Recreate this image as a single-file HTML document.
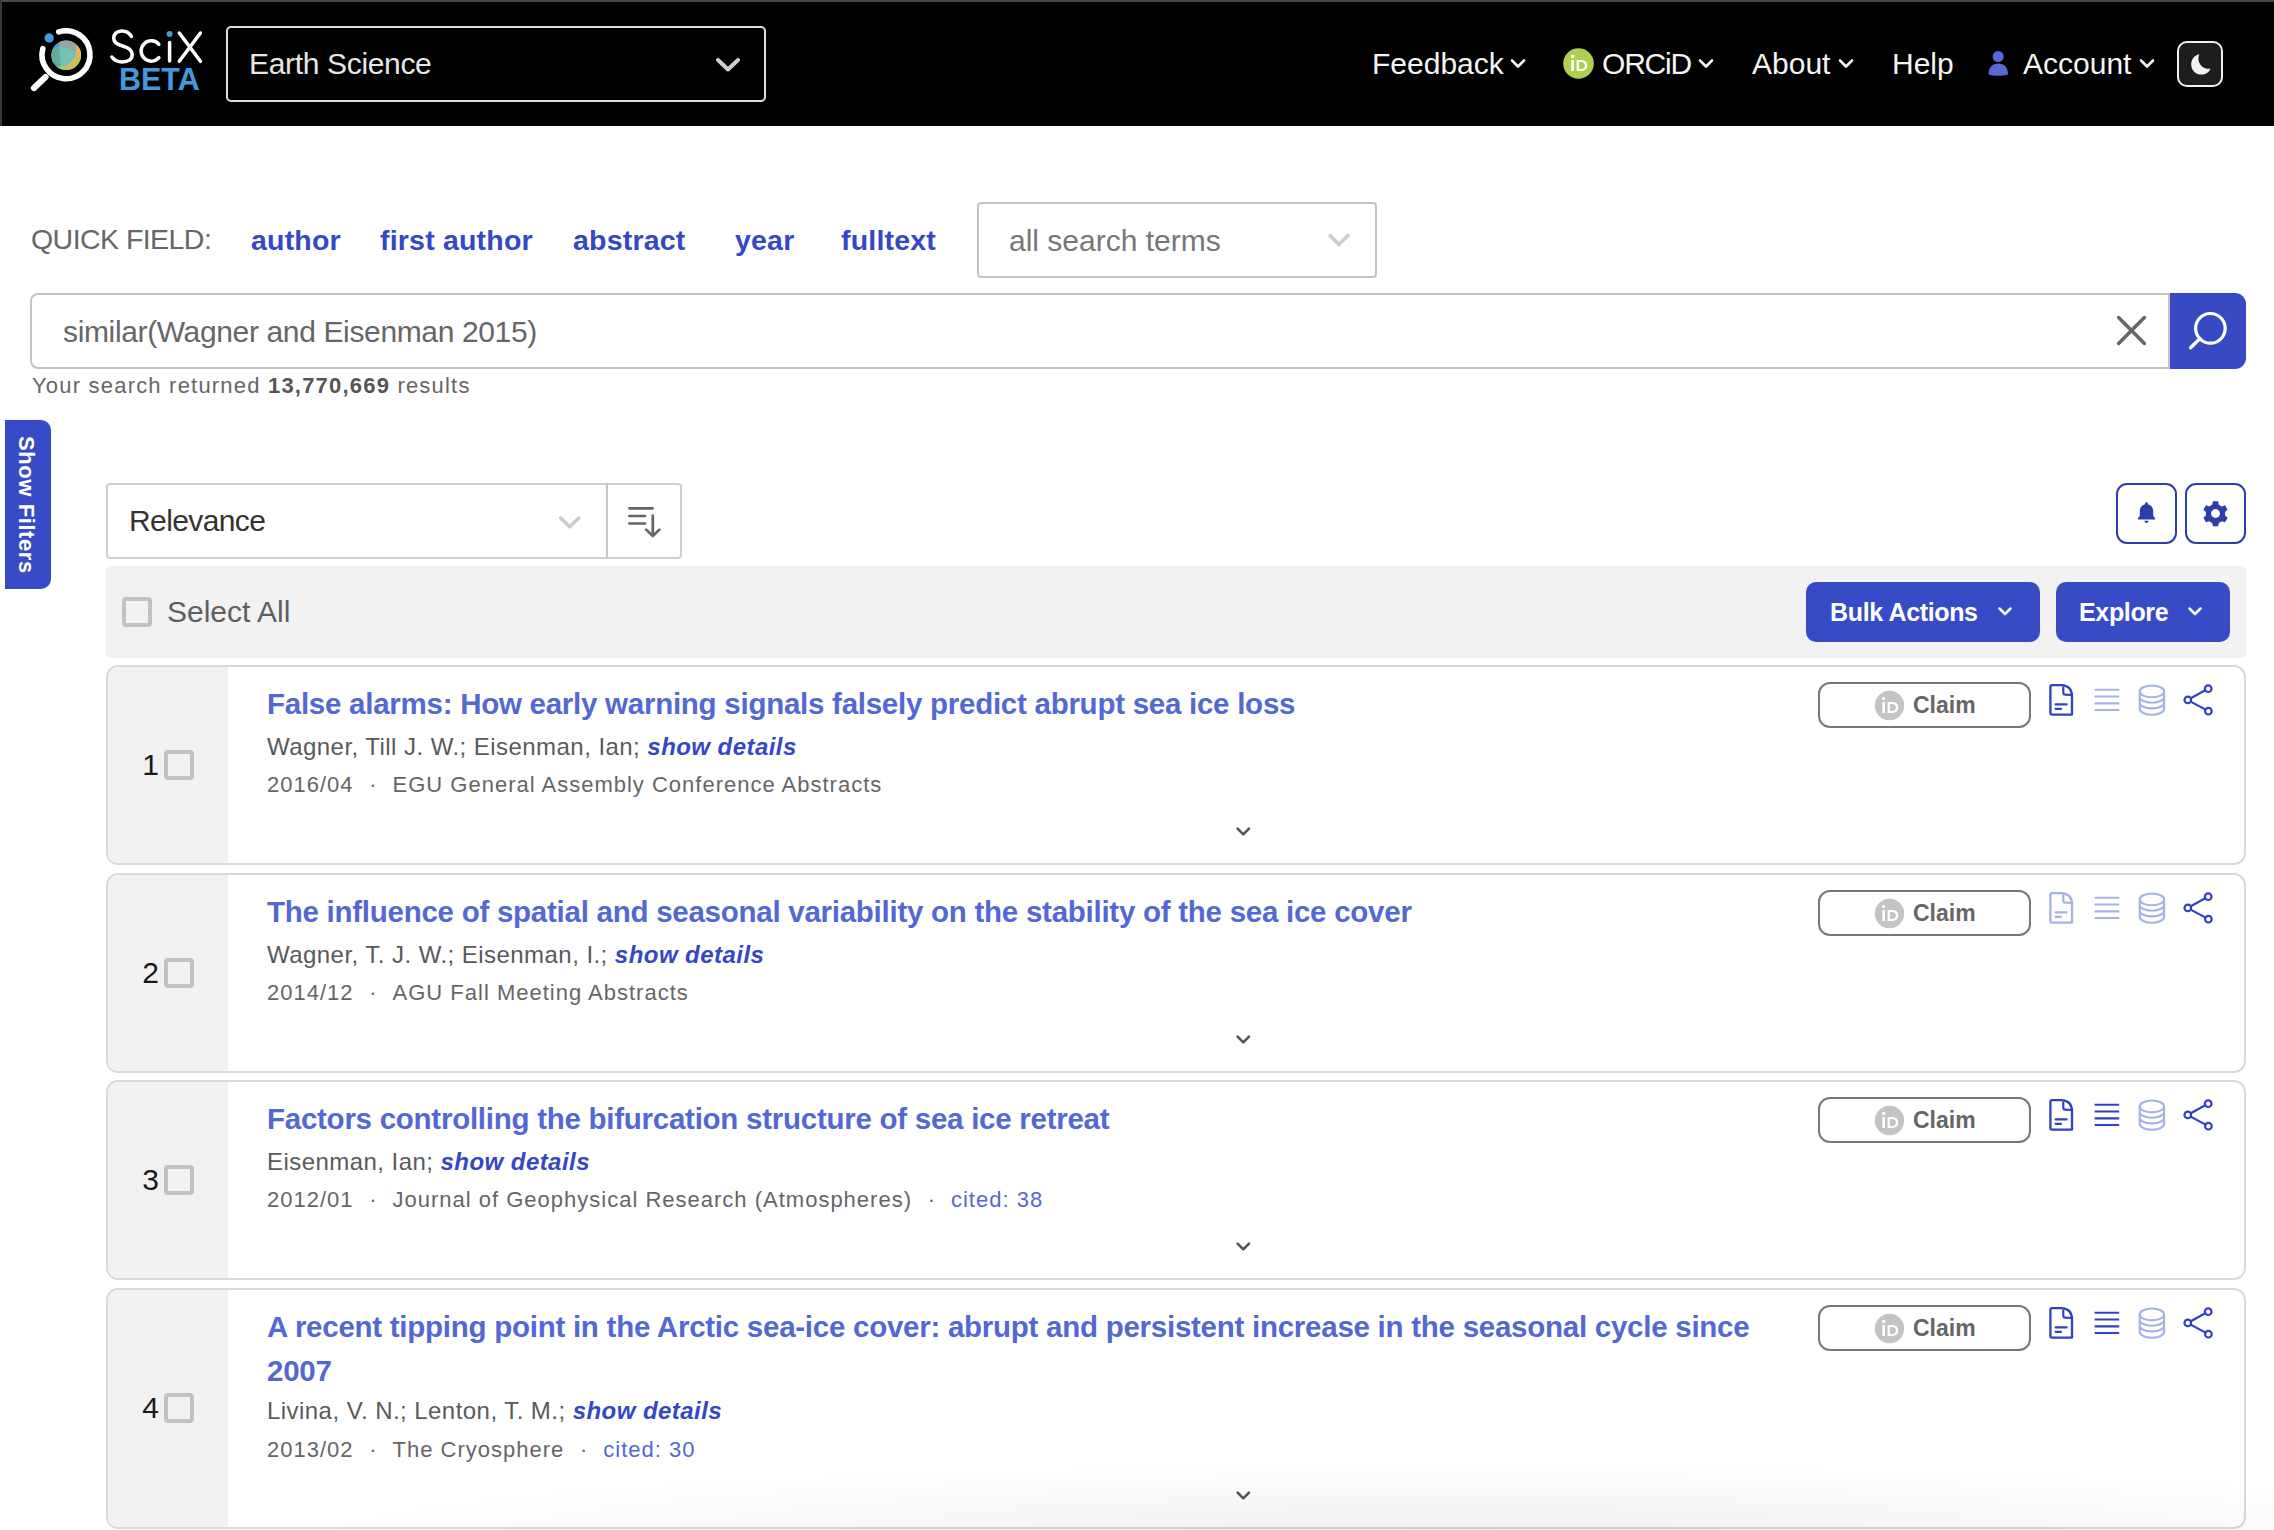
<!DOCTYPE html>
<html><head><meta charset="utf-8">
<style>
*{box-sizing:border-box;margin:0;padding:0}
html,body{width:2274px;height:1530px;overflow:hidden;background:#fff}
body{position:relative;font-family:"Liberation Sans",sans-serif;color:#333}
.a{position:absolute;white-space:nowrap;line-height:1}
#hdr{position:absolute;left:0;top:0;width:2274px;height:126px;background:#000}
#hdr .topline{position:absolute;left:0;top:0;width:2274px;height:2px;background:#484848}
#hdr .leftline{position:absolute;left:0;top:0;width:2px;height:126px;background:#383838}
.nav{color:#f4f4f4;font-size:30px}
.chev{position:absolute}

.ql{top:226px;font-size:28.5px;font-weight:700;color:#3547c4;letter-spacing:0.2px}
.cb{width:30px;height:30px;border:4px solid #c2c2c2;border-radius:4px;background:transparent}
.btn{background:#384bc6;border-radius:10px}
.btnt{top:600px;font-size:25px;font-weight:700;color:#fff;letter-spacing:-0.35px}

.card{position:absolute;left:106px;width:2140px;border:2px solid #d9d9d9;border-radius:12px;overflow:hidden;background:#fff}
.lcol{position:absolute;left:0;top:0;width:120px;height:100%;background:#f2f2f2}
.num{left:0;width:120px;text-align:center;font-size:30px;color:#1a1a1a;padding-left:0px}
.cb2{display:inline-block;width:30px;height:30px;border:4px solid #c2c2c2;border-radius:4px;vertical-align:-5px;margin-left:5px}
.ttl{left:159px;font-size:29.5px;font-weight:700;color:#5468d4;letter-spacing:-0.26px}
.auth{left:159px;font-size:24px;color:#5a5a5a;letter-spacing:0.45px}
.auth b{color:#3547c4}
.meta{left:159px;font-size:22px;color:#666;letter-spacing:1.0px}
.dot{display:inline-block;width:39px;text-align:center;letter-spacing:0}
.claim{left:1710px;top:15px;width:213px;height:46px;border:2px solid #777;border-radius:12px}
.claimt{left:1805px;top:27px;font-size:23px;font-weight:700;color:#666}
</style></head><body>

<div id="hdr">
  <div class="topline"></div><div class="leftline"></div>
  <!-- logo -->
  <svg class="a" style="left:0;top:0" width="220" height="126" viewBox="0 0 220 126">
    <defs><clipPath id="globe"><circle cx="66.2" cy="55.2" r="14.8"/></clipPath></defs>
    <g clip-path="url(#globe)">
      <rect x="50" y="40" width="32" height="32" fill="#74c2b4"/>
      <path d="M50,40 L62,40 L59,47 L50,49 Z" fill="#4499d9"/>
      <path d="M60,40 L82,40 L82,58 L76,52 Q68,47 59,47 Z" fill="#93a6a0"/>
      <path d="M76,46 L82,46 L82,62 L76,53 Z" fill="#f0b060"/>
      <path d="M76,53 L82,60 L82,72 L64,72 L63,67 Q72,64 76,53 Z" fill="#cdbf5e"/>
      <path d="M50,67 L64,66 L68,72 L50,72 Z" fill="#9fcf5c"/>
      <path d="M50,49 L59,47 L61,66 L50,67 Z" fill="#62ab9c"/>
    </g>
    <path d="M58.8,31.9 A24,24 0 1 1 42.8,48.6" fill="none" stroke="#fff" stroke-width="5.6" stroke-linecap="round"/>
    <path d="M34,88 L45.5,77" fill="none" stroke="#fff" stroke-width="6.2" stroke-linecap="round"/>
    <circle cx="49.2" cy="38" r="4.7" fill="#4499d9"/>
    <!-- SciX -->
    <g fill="none" stroke="#fff" stroke-width="3.5" stroke-linecap="round">
      <path d="M131.5,36.5 C129.3,32.6 125.8,30.9 121.8,30.9 C116.6,30.9 113.6,34.3 113.7,38.4 C113.8,43.2 118,44.8 122.6,46 C128.3,47.5 132.2,49.6 132.2,54.6 C132.2,59.6 128,62 122.4,62 C117.6,62 114.2,60.2 111.9,57"/>
      <path d="M158.9,44.3 A10.15,10.15 0 1 0 158.9,57.7"/>
      <path d="M169.6,42.4 L169.6,61"/>
      <path d="M179.3,33 L200.4,61.3 M200.4,33 L179.3,61.3"/>
    </g>
    <circle cx="169.6" cy="34" r="3" fill="#4499d9"/>
  </svg>
  <div class="a" style="left:119px;top:64px;font-size:30.5px;font-weight:700;color:#4499dd;letter-spacing:0px" id="beta">BETA</div>

  <!-- Earth science select -->
  <div class="a" style="left:226px;top:26px;width:540px;height:76px;border:2px solid #dedede;border-radius:5px"></div>
  <div class="a nav" id="earth" style="left:249px;top:49px;color:#e6e6e6;letter-spacing:-0.33px">Earth Science</div>
  <svg class="a" style="left:714px;top:56px" width="28" height="18" viewBox="0 0 28 18"><path d="M4,4 L14,13.5 L24,4" fill="none" stroke="#cfcfcf" stroke-width="4" stroke-linecap="round" stroke-linejoin="round"/></svg>

  <!-- right nav -->
  <div class="a nav" id="fb" style="left:1372px;top:49px">Feedback</div>
  <svg class="a" style="left:1509px;top:57px" width="18" height="13" viewBox="0 0 18 13"><path d="M3,3.5 L9,9.5 L15,3.5" fill="none" stroke="#f4f4f4" stroke-width="2.6" stroke-linecap="round" stroke-linejoin="round"/></svg>
  <svg class="a" style="left:1563px;top:48px" width="31" height="31" viewBox="0 0 31 31"><circle cx="15.5" cy="15.5" r="15.3" fill="#aecf4f"/><rect x="8.3" y="12" width="2.6" height="11" fill="#fff"/><circle cx="9.6" cy="8.4" r="1.7" fill="#fff"/><path d="M13.6,12 h4.6 c3.8,0 6,2.3 6,5.5 c0,3.2 -2.2,5.5 -6,5.5 h-4.6 z M15.9,14 v7 h2.3 c2.4,0 3.7,-1.4 3.7,-3.5 c0,-2.1 -1.3,-3.5 -3.7,-3.5 z" fill="#fff"/></svg>
  <div class="a nav" id="orcid" style="left:1602px;top:49px;letter-spacing:-1.2px">ORCiD</div>
  <svg class="a" style="left:1697px;top:57px" width="18" height="13" viewBox="0 0 18 13"><path d="M3,3.5 L9,9.5 L15,3.5" fill="none" stroke="#f4f4f4" stroke-width="2.6" stroke-linecap="round" stroke-linejoin="round"/></svg>
  <div class="a nav" id="about" style="left:1752px;top:49px">About</div>
  <svg class="a" style="left:1837px;top:57px" width="18" height="13" viewBox="0 0 18 13"><path d="M3,3.5 L9,9.5 L15,3.5" fill="none" stroke="#f4f4f4" stroke-width="2.6" stroke-linecap="round" stroke-linejoin="round"/></svg>
  <div class="a nav" id="help" style="left:1892px;top:49px">Help</div>
  <svg class="a" style="left:1987px;top:50px" width="23" height="27" viewBox="0 0 23 27"><circle cx="11.2" cy="6.5" r="5.5" fill="#5869d3"/><path d="M1.5,24.5 C1.5,17 5.5,13.5 11.2,13.5 C17,13.5 21,17 21,24.5 C17,26.2 5.5,26.2 1.5,24.5 Z" fill="#5869d3"/></svg>
  <div class="a nav" id="acct" style="left:2023px;top:49px">Account</div>
  <svg class="a" style="left:2138px;top:57px" width="18" height="13" viewBox="0 0 18 13"><path d="M3,3.5 L9,9.5 L15,3.5" fill="none" stroke="#f4f4f4" stroke-width="2.6" stroke-linecap="round" stroke-linejoin="round"/></svg>
  <div class="a" style="left:2177px;top:41px;width:46px;height:46px;border:2px solid #f0f0f0;border-radius:10px;background:#1d1d1d"></div>
  <svg class="a" style="left:2177px;top:41px" width="46" height="46" viewBox="0 0 46 46"><path d="M22.3,13.2 C17.5,14.2 14.2,18.4 14.2,23.4 C14.2,29 18.8,33.6 24.4,33.6 C28.5,33.6 32,31.2 33.5,27.7 C27.3,28.8 21.4,24 21.4,17.5 C21.4,16 21.7,14.5 22.3,13.2 Z" fill="#f2f2f2"/></svg>
</div>


<!-- quick field -->
<div class="a" id="qf" style="left:31px;top:225px;font-size:28.5px;color:#666;letter-spacing:-0.55px">QUICK FIELD:</div>
<div class="a ql" style="left:251px">author</div>
<div class="a ql" style="left:380px">first author</div>
<div class="a ql" style="left:573px">abstract</div>
<div class="a ql" style="left:735px">year</div>
<div class="a ql" style="left:841px">fulltext</div>
<div class="a" style="left:977px;top:202px;width:400px;height:76px;border:2px solid #c4c4c4;border-radius:4px"></div>
<div class="a" id="ast" style="left:1009px;top:226px;font-size:30px;color:#777">all search terms</div>
<svg class="a" style="left:1325px;top:230px" width="28" height="20" viewBox="0 0 28 20"><path d="M4,4.5 L14,14.5 L24,4.5" fill="none" stroke="#cccccc" stroke-width="3.6" stroke-linecap="butt" stroke-linejoin="miter"/></svg>

<!-- search input -->
<div class="a" style="left:30px;top:293px;width:2140px;height:76px;border:2px solid #c4c4c4;border-radius:8px 0 0 8px;border-right:2px solid #c4c4c4"></div>
<div class="a" id="q" style="left:63px;top:317px;font-size:30px;color:#666;letter-spacing:-0.36px">similar(Wagner and Eisenman 2015)</div>
<svg class="a" style="left:2113px;top:312px" width="37" height="37" viewBox="0 0 37 37"><path d="M5.6,5.6 L31.4,31.4 M31.4,5.6 L5.6,31.4" fill="none" stroke="#666" stroke-width="3.5" stroke-linecap="round"/></svg>
<div class="a" style="left:2170px;top:293px;width:76px;height:76px;background:#374ac4;border-radius:0 11px 11px 0"></div>
<svg class="a" style="left:2170px;top:293px" width="76" height="76" viewBox="0 0 76 76"><circle cx="40.4" cy="35.3" r="14.8" fill="none" stroke="#fff" stroke-width="3.2"/><path d="M30,45.5 L20.6,54.8" fill="none" stroke="#fff" stroke-width="3.4" stroke-linecap="round"/></svg>
<div class="a" id="ysr" style="left:32px;top:375px;font-size:22px;color:#666;letter-spacing:1.2px">Your search returned <b style="color:#555">13,770,669</b> results</div>

<!-- show filters tab -->
<div class="a" style="left:5px;top:420px;width:46px;height:169px;background:#384bc6;border-radius:0 10px 10px 0"></div>
<div class="a" id="sf" style="left:17px;top:436px;font-size:22px;font-weight:700;color:#fff;letter-spacing:0.58px;transform-origin:0 0;transform:translate(20px,0) rotate(90deg)">Show Filters</div>

<!-- sort -->
<div class="a" style="left:106px;top:483px;width:576px;height:76px;border:2px solid #cfcfcf;border-radius:4px"></div>
<div class="a" style="left:606px;top:483px;width:2px;height:76px;background:#c8c8c8"></div>
<div class="a" id="rel" style="left:129px;top:506px;font-size:30px;color:#333;letter-spacing:-0.6px">Relevance</div>
<svg class="a" style="left:555px;top:512px" width="30" height="20" viewBox="0 0 30 20"><path d="M5.6,6 L14.7,14.8 L23.8,6" fill="none" stroke="#cccccc" stroke-width="3.6" stroke-linecap="round" stroke-linejoin="round"/></svg>
<svg class="a" style="left:622px;top:502px" width="42" height="40" viewBox="0 0 42 40"><g fill="none" stroke="#666" stroke-width="2.7" stroke-linecap="round" stroke-linejoin="round"><path d="M7.4,6.3 H30.6 M7.4,14 H23 M7.4,21.5 H23 M30.8,13.6 V33.8 M24.2,27.6 L30.8,34 L37.4,27.6"/></g></svg>

<!-- bell / gear -->
<div class="a" style="left:2116px;top:483px;width:61px;height:61px;border:2px solid #2c3ea8;border-radius:11px"></div>
<svg class="a" style="left:2116px;top:483px" width="61" height="61" viewBox="0 0 61 61"><g transform="translate(30.5,30.5) scale(0.86) translate(-30.5,-30.5)"><path d="M30.5,17.5 c-1,0 -1.6,0.7 -1.6,1.5 v0.6 c-3.8,0.8 -6.2,4 -6.2,8 v5.5 l-2.3,3.3 v1 h20.2 v-1 l-2.3,-3.3 v-5.5 c0,-4 -2.4,-7.2 -6.2,-8 v-0.6 c0,-0.8 -0.6,-1.5 -1.6,-1.5 z M28,39 a2.5,2.5 0 0 0 5,0 z" fill="#2c3ea8"/></g></svg>
<div class="a" style="left:2185px;top:483px;width:61px;height:61px;border:2px solid #2c3ea8;border-radius:11px"></div>
<svg class="a" style="left:2185px;top:483px" width="61" height="61" viewBox="0 0 61 61"><g transform="translate(30.5,30.5)"><path id="gear" d="M-2.6,-12.2 h5.2 l0.7,3.4 a9,9 0 0 1 2.9,1.7 l3.3,-1.1 l2.6,4.5 l-2.6,2.3 a9,9 0 0 1 0,3.4 l2.6,2.3 l-2.6,4.5 l-3.3,-1.1 a9,9 0 0 1 -2.9,1.7 l-0.7,3.4 h-5.2 l-0.7,-3.4 a9,9 0 0 1 -2.9,-1.7 l-3.3,1.1 l-2.6,-4.5 l2.6,-2.3 a9,9 0 0 1 0,-3.4 l-2.6,-2.3 l2.6,-4.5 l3.3,1.1 a9,9 0 0 1 2.9,-1.7 z M0,-4.4 a4.4,4.4 0 1 0 0.01,0 z" fill="#2c3ea8" fill-rule="evenodd"/></g></svg>

<!-- select all bar -->
<div class="a" style="left:106px;top:566px;width:2140px;height:92px;background:#f2f2f2;border-radius:5px"></div>
<div class="a cb" style="left:122px;top:597px"></div>
<div class="a" id="sa" style="left:167px;top:597px;font-size:30px;color:#5f5f5f">Select All</div>
<div class="a btn" style="left:1806px;top:582px;width:234px;height:60px"></div>
<div class="a btnt" id="bulk" style="left:1830px">Bulk Actions</div>
<svg class="a" style="left:1996px;top:604px" width="18" height="15" viewBox="0 0 18 15"><path d="M3.5,4.5 L9,10 L14.5,4.5" fill="none" stroke="#fff" stroke-width="2.5" stroke-linecap="round" stroke-linejoin="round"/></svg>
<div class="a btn" style="left:2056px;top:582px;width:174px;height:60px"></div>
<div class="a btnt" id="expl" style="left:2079px">Explore</div>
<svg class="a" style="left:2186px;top:604px" width="18" height="15" viewBox="0 0 18 15"><path d="M3.5,4.5 L9,10 L14.5,4.5" fill="none" stroke="#fff" stroke-width="2.5" stroke-linecap="round" stroke-linejoin="round"/></svg>

<div class="card" style="top:665px;height:200px">
<div class="lcol"></div>
<div class="a num" style="top:82.9px">1<span class="cb2"></span></div>
<div class="a ttl" style="top:22.4px">False alarms: How early warning signals falsely predict abrupt sea ice loss</div>
<div class="a auth" style="top:67.7px">Wagner, Till J. W.; Eisenman, Ian; <b><i>show details</i></b></div>
<div class="a meta" style="top:107.4px">2016/04<span class="dot">·</span>EGU General Assembly Conference Abstracts</div>
<svg class="a" style="left:1127px;top:158px" width="22" height="16" viewBox="0 0 22 16"><path d="M2.6,3.6 L8.3,9.3 L14,3.6" fill="none" stroke="#555" stroke-width="2.6" stroke-linecap="round" stroke-linejoin="round"/></svg>
<div class="a claim"></div>
<svg class="a" style="left:1766px;top:22.5px" width="31" height="31" viewBox="0 0 31 31"><circle cx="15.5" cy="15.5" r="14.7" fill="#c4c4c4"/><rect x="8.3" y="12" width="2.6" height="11" fill="#fff"/><circle cx="9.6" cy="8.4" r="1.7" fill="#fff"/><path d="M13.6,12 h4.6 c3.8,0 6,2.3 6,5.5 c0,3.2 -2.2,5.5 -6,5.5 h-4.6 z M15.9,14 v7 h2.3 c2.4,0 3.7,-1.4 3.7,-3.5 c0,-2.1 -1.3,-3.5 -3.7,-3.5 z" fill="#fff"/></svg>
<div class="a claimt">Claim</div>
<svg class="a" style="left:1930px;top:10px" width="190" height="50" viewBox="1930 10 190 50"><path d="M1942.4,20 Q1942.4,18.1 1944.3,18.1 H1953.2 Q1964,18.5 1964,29.5 V47.6 H1944.3 Q1942.4,47.6 1942.4,45.7 Z" fill="none" stroke="#3041c2" stroke-width="2.3" stroke-linejoin="round"/><path d="M1955.3,19.5 V25.8 Q1955.3,27.6 1957.2,27.6 L1963.5,28" fill="none" stroke="#3041c2" stroke-width="2.2" stroke-linejoin="round"/><path d="M1947.6,37.3 H1958.6 M1947.6,41.8 H1953" fill="none" stroke="#3041c2" stroke-width="2.2" stroke-linecap="round"/><path d="M1986.6,22.8 H2011.2 M1986.6,29.5 H2011.2 M1986.6,36.4 H2011.2 M1986.6,43 H2011.2" fill="none" stroke="#a7b1e5" stroke-width="2.1" stroke-linecap="butt"/><g fill="none" stroke="#a7b1e5" stroke-width="2.1"><ellipse cx="2043.9" cy="24.4" rx="12.2" ry="5.9"/><path d="M2031.7,24.4 V41.8 C2031.7,45 2037,47.7 2043.9,47.7 C2050.8,47.7 2056.1,45 2056.1,41.8 V24.4 M2031.7,30 C2031.7,33.2 2037,35.7 2043.9,35.7 C2050.8,35.7 2056.1,33.2 2056.1,30 M2031.7,35.7 C2031.7,38.9 2037,41.4 2043.9,41.4 C2050.8,41.4 2056.1,38.9 2056.1,35.7"/></g><g fill="none" stroke="#3041c2" stroke-width="2.2"><circle cx="2100.2" cy="21.7" r="3.3"/><circle cx="2079.8" cy="32.9" r="3.3"/><circle cx="2100.4" cy="44.2" r="3.3"/><path d="M2082.7,31.2 L2097.3,23.3 M2082.7,34.6 L2097.5,42.6"/></g></svg>
</div>
<div class="card" style="top:873px;height:200px">
<div class="lcol"></div>
<div class="a num" style="top:82.9px">2<span class="cb2"></span></div>
<div class="a ttl" style="top:22.4px">The influence of spatial and seasonal variability on the stability of the sea ice cover</div>
<div class="a auth" style="top:67.7px">Wagner, T. J. W.; Eisenman, I.; <b><i>show details</i></b></div>
<div class="a meta" style="top:107.4px">2014/12<span class="dot">·</span>AGU Fall Meeting Abstracts</div>
<svg class="a" style="left:1127px;top:158px" width="22" height="16" viewBox="0 0 22 16"><path d="M2.6,3.6 L8.3,9.3 L14,3.6" fill="none" stroke="#555" stroke-width="2.6" stroke-linecap="round" stroke-linejoin="round"/></svg>
<div class="a claim"></div>
<svg class="a" style="left:1766px;top:22.5px" width="31" height="31" viewBox="0 0 31 31"><circle cx="15.5" cy="15.5" r="14.7" fill="#c4c4c4"/><rect x="8.3" y="12" width="2.6" height="11" fill="#fff"/><circle cx="9.6" cy="8.4" r="1.7" fill="#fff"/><path d="M13.6,12 h4.6 c3.8,0 6,2.3 6,5.5 c0,3.2 -2.2,5.5 -6,5.5 h-4.6 z M15.9,14 v7 h2.3 c2.4,0 3.7,-1.4 3.7,-3.5 c0,-2.1 -1.3,-3.5 -3.7,-3.5 z" fill="#fff"/></svg>
<div class="a claimt">Claim</div>
<svg class="a" style="left:1930px;top:10px" width="190" height="50" viewBox="1930 10 190 50"><path d="M1942.4,20 Q1942.4,18.1 1944.3,18.1 H1953.2 Q1964,18.5 1964,29.5 V47.6 H1944.3 Q1942.4,47.6 1942.4,45.7 Z" fill="none" stroke="#a7b1e5" stroke-width="2.3" stroke-linejoin="round"/><path d="M1955.3,19.5 V25.8 Q1955.3,27.6 1957.2,27.6 L1963.5,28" fill="none" stroke="#a7b1e5" stroke-width="2.2" stroke-linejoin="round"/><path d="M1947.6,37.3 H1958.6 M1947.6,41.8 H1953" fill="none" stroke="#a7b1e5" stroke-width="2.2" stroke-linecap="round"/><path d="M1986.6,22.8 H2011.2 M1986.6,29.5 H2011.2 M1986.6,36.4 H2011.2 M1986.6,43 H2011.2" fill="none" stroke="#a7b1e5" stroke-width="2.1" stroke-linecap="butt"/><g fill="none" stroke="#a7b1e5" stroke-width="2.1"><ellipse cx="2043.9" cy="24.4" rx="12.2" ry="5.9"/><path d="M2031.7,24.4 V41.8 C2031.7,45 2037,47.7 2043.9,47.7 C2050.8,47.7 2056.1,45 2056.1,41.8 V24.4 M2031.7,30 C2031.7,33.2 2037,35.7 2043.9,35.7 C2050.8,35.7 2056.1,33.2 2056.1,30 M2031.7,35.7 C2031.7,38.9 2037,41.4 2043.9,41.4 C2050.8,41.4 2056.1,38.9 2056.1,35.7"/></g><g fill="none" stroke="#3041c2" stroke-width="2.2"><circle cx="2100.2" cy="21.7" r="3.3"/><circle cx="2079.8" cy="32.9" r="3.3"/><circle cx="2100.4" cy="44.2" r="3.3"/><path d="M2082.7,31.2 L2097.3,23.3 M2082.7,34.6 L2097.5,42.6"/></g></svg>
</div>
<div class="card" style="top:1080px;height:200px">
<div class="lcol"></div>
<div class="a num" style="top:82.9px">3<span class="cb2"></span></div>
<div class="a ttl" style="top:22.4px">Factors controlling the bifurcation structure of sea ice retreat</div>
<div class="a auth" style="top:67.7px">Eisenman, Ian; <b><i>show details</i></b></div>
<div class="a meta" style="top:107.4px">2012/01<span class="dot">·</span>Journal of Geophysical Research (Atmospheres)<span class="dot">·</span><span style="color:#5468d4">cited: 38</span></div>
<svg class="a" style="left:1127px;top:158px" width="22" height="16" viewBox="0 0 22 16"><path d="M2.6,3.6 L8.3,9.3 L14,3.6" fill="none" stroke="#555" stroke-width="2.6" stroke-linecap="round" stroke-linejoin="round"/></svg>
<div class="a claim"></div>
<svg class="a" style="left:1766px;top:22.5px" width="31" height="31" viewBox="0 0 31 31"><circle cx="15.5" cy="15.5" r="14.7" fill="#c4c4c4"/><rect x="8.3" y="12" width="2.6" height="11" fill="#fff"/><circle cx="9.6" cy="8.4" r="1.7" fill="#fff"/><path d="M13.6,12 h4.6 c3.8,0 6,2.3 6,5.5 c0,3.2 -2.2,5.5 -6,5.5 h-4.6 z M15.9,14 v7 h2.3 c2.4,0 3.7,-1.4 3.7,-3.5 c0,-2.1 -1.3,-3.5 -3.7,-3.5 z" fill="#fff"/></svg>
<div class="a claimt">Claim</div>
<svg class="a" style="left:1930px;top:10px" width="190" height="50" viewBox="1930 10 190 50"><path d="M1942.4,20 Q1942.4,18.1 1944.3,18.1 H1953.2 Q1964,18.5 1964,29.5 V47.6 H1944.3 Q1942.4,47.6 1942.4,45.7 Z" fill="none" stroke="#3041c2" stroke-width="2.3" stroke-linejoin="round"/><path d="M1955.3,19.5 V25.8 Q1955.3,27.6 1957.2,27.6 L1963.5,28" fill="none" stroke="#3041c2" stroke-width="2.2" stroke-linejoin="round"/><path d="M1947.6,37.3 H1958.6 M1947.6,41.8 H1953" fill="none" stroke="#3041c2" stroke-width="2.2" stroke-linecap="round"/><path d="M1986.6,22.8 H2011.2 M1986.6,29.5 H2011.2 M1986.6,36.4 H2011.2 M1986.6,43 H2011.2" fill="none" stroke="#3041c2" stroke-width="2.1" stroke-linecap="butt"/><g fill="none" stroke="#a7b1e5" stroke-width="2.1"><ellipse cx="2043.9" cy="24.4" rx="12.2" ry="5.9"/><path d="M2031.7,24.4 V41.8 C2031.7,45 2037,47.7 2043.9,47.7 C2050.8,47.7 2056.1,45 2056.1,41.8 V24.4 M2031.7,30 C2031.7,33.2 2037,35.7 2043.9,35.7 C2050.8,35.7 2056.1,33.2 2056.1,30 M2031.7,35.7 C2031.7,38.9 2037,41.4 2043.9,41.4 C2050.8,41.4 2056.1,38.9 2056.1,35.7"/></g><g fill="none" stroke="#3041c2" stroke-width="2.2"><circle cx="2100.2" cy="21.7" r="3.3"/><circle cx="2079.8" cy="32.9" r="3.3"/><circle cx="2100.4" cy="44.2" r="3.3"/><path d="M2082.7,31.2 L2097.3,23.3 M2082.7,34.6 L2097.5,42.6"/></g></svg>
</div>
<div class="card" style="top:1288px;height:241px">
<div class="lcol"></div>
<div class="a num" style="top:103.4px">4<span class="cb2"></span></div>
<div class="a ttl" style="top:22.4px">A recent tipping point in the Arctic sea-ice cover: abrupt and persistent increase in the seasonal cycle since</div>
<div class="a ttl" style="top:66.4px">2007</div>
<div class="a auth" style="top:109.2px">Livina, V. N.; Lenton, T. M.; <b><i>show details</i></b></div>
<div class="a meta" style="top:148.9px">2013/02<span class="dot">·</span>The Cryosphere<span class="dot">·</span><span style="color:#5468d4">cited: 30</span></div>
<svg class="a" style="left:1127px;top:199px" width="22" height="16" viewBox="0 0 22 16"><path d="M2.6,3.6 L8.3,9.3 L14,3.6" fill="none" stroke="#555" stroke-width="2.6" stroke-linecap="round" stroke-linejoin="round"/></svg>
<div class="a claim"></div>
<svg class="a" style="left:1766px;top:22.5px" width="31" height="31" viewBox="0 0 31 31"><circle cx="15.5" cy="15.5" r="14.7" fill="#c4c4c4"/><rect x="8.3" y="12" width="2.6" height="11" fill="#fff"/><circle cx="9.6" cy="8.4" r="1.7" fill="#fff"/><path d="M13.6,12 h4.6 c3.8,0 6,2.3 6,5.5 c0,3.2 -2.2,5.5 -6,5.5 h-4.6 z M15.9,14 v7 h2.3 c2.4,0 3.7,-1.4 3.7,-3.5 c0,-2.1 -1.3,-3.5 -3.7,-3.5 z" fill="#fff"/></svg>
<div class="a claimt">Claim</div>
<svg class="a" style="left:1930px;top:10px" width="190" height="50" viewBox="1930 10 190 50"><path d="M1942.4,20 Q1942.4,18.1 1944.3,18.1 H1953.2 Q1964,18.5 1964,29.5 V47.6 H1944.3 Q1942.4,47.6 1942.4,45.7 Z" fill="none" stroke="#3041c2" stroke-width="2.3" stroke-linejoin="round"/><path d="M1955.3,19.5 V25.8 Q1955.3,27.6 1957.2,27.6 L1963.5,28" fill="none" stroke="#3041c2" stroke-width="2.2" stroke-linejoin="round"/><path d="M1947.6,37.3 H1958.6 M1947.6,41.8 H1953" fill="none" stroke="#3041c2" stroke-width="2.2" stroke-linecap="round"/><path d="M1986.6,22.8 H2011.2 M1986.6,29.5 H2011.2 M1986.6,36.4 H2011.2 M1986.6,43 H2011.2" fill="none" stroke="#3041c2" stroke-width="2.1" stroke-linecap="butt"/><g fill="none" stroke="#a7b1e5" stroke-width="2.1"><ellipse cx="2043.9" cy="24.4" rx="12.2" ry="5.9"/><path d="M2031.7,24.4 V41.8 C2031.7,45 2037,47.7 2043.9,47.7 C2050.8,47.7 2056.1,45 2056.1,41.8 V24.4 M2031.7,30 C2031.7,33.2 2037,35.7 2043.9,35.7 C2050.8,35.7 2056.1,33.2 2056.1,30 M2031.7,35.7 C2031.7,38.9 2037,41.4 2043.9,41.4 C2050.8,41.4 2056.1,38.9 2056.1,35.7"/></g><g fill="none" stroke="#3041c2" stroke-width="2.2"><circle cx="2100.2" cy="21.7" r="3.3"/><circle cx="2079.8" cy="32.9" r="3.3"/><circle cx="2100.4" cy="44.2" r="3.3"/><path d="M2082.7,31.2 L2097.3,23.3 M2082.7,34.6 L2097.5,42.6"/></g></svg>
</div>
<div class="a" style="left:0;top:1440px;width:2274px;height:90px;background:radial-gradient(ellipse 1150px 70px at 1450px 90px, rgba(0,0,0,0.055), rgba(0,0,0,0) 100%);pointer-events:none"></div>
</body></html>
